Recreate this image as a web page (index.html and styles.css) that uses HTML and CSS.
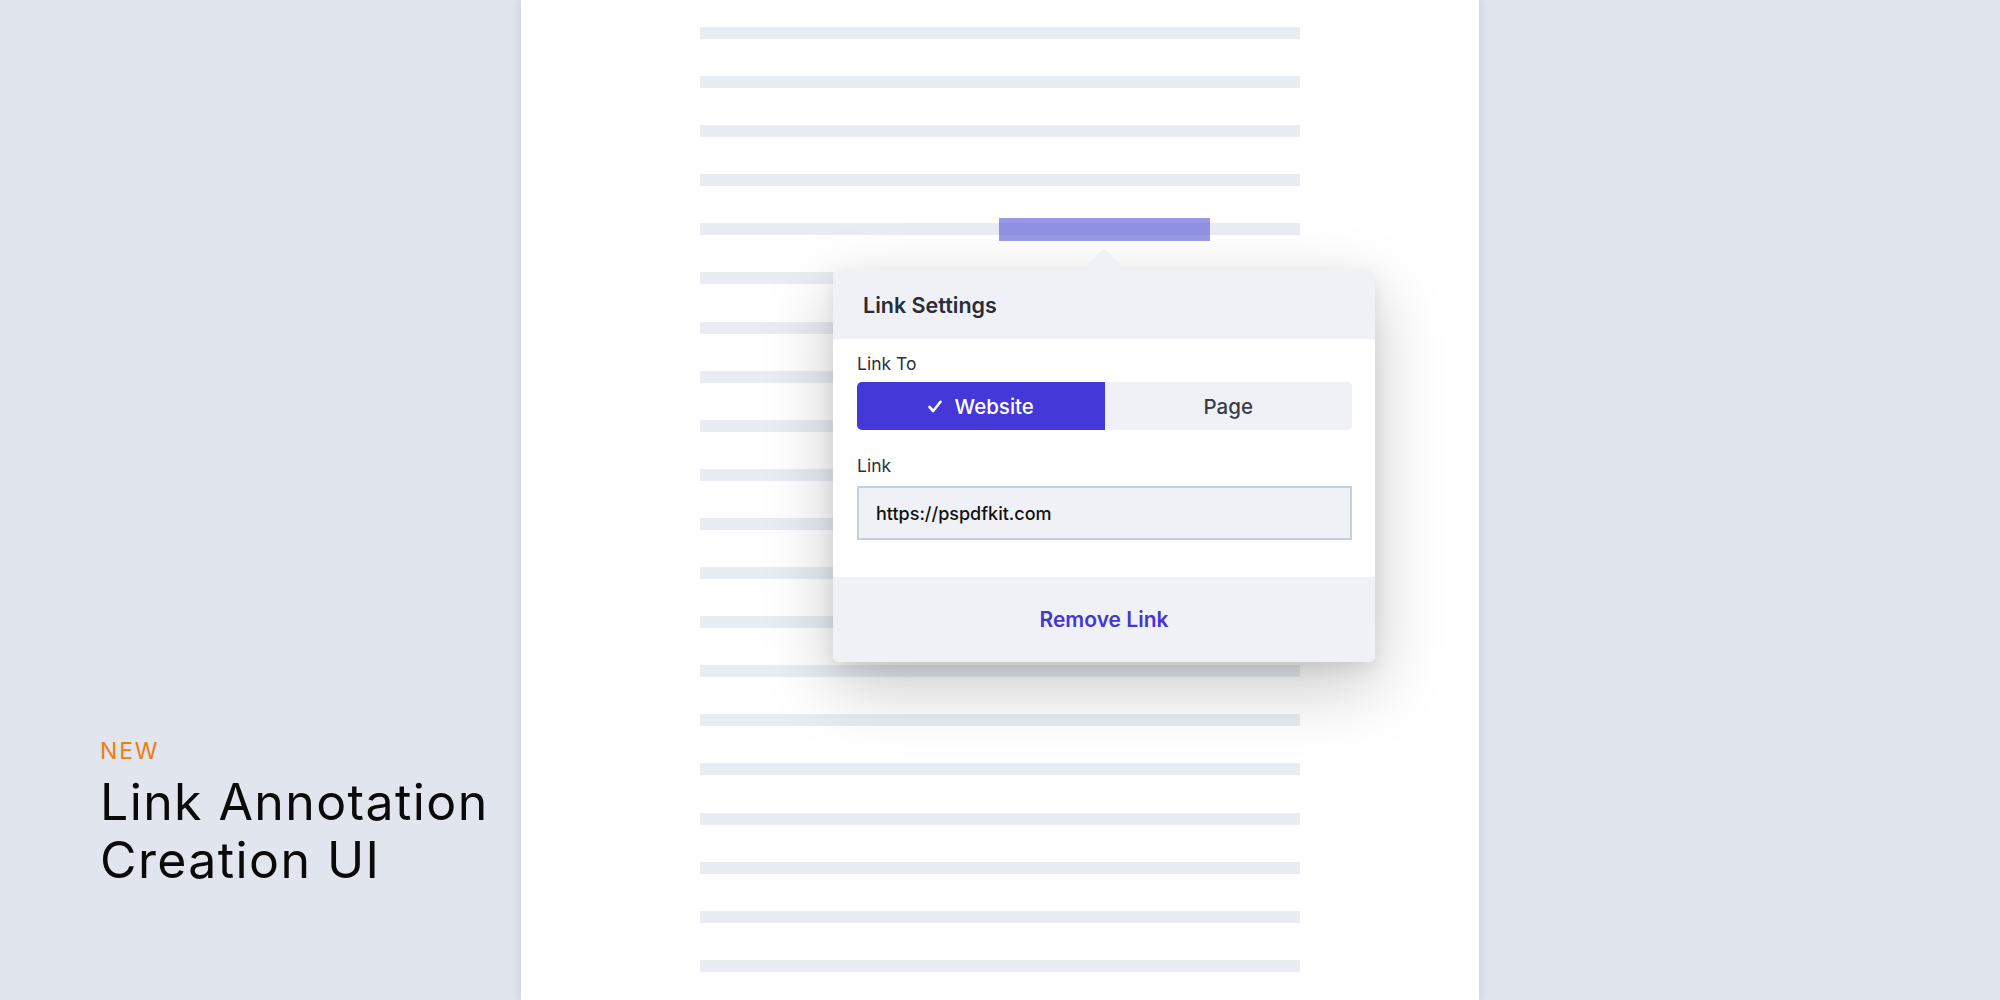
FILE: index.html
```html
<!DOCTYPE html>
<html lang="en">
<head>
<meta charset="utf-8">
<title>Link Annotation Creation UI</title>
<link rel="stylesheet" href="styles.css">
</head>
<body>
<div class="stage">
  <aside class="caption">
    <div class="eyebrow">NEW</div>
    <h1 class="headline">Link Annotation<br>Creation UI</h1>
  </aside>
  <main class="sheet">
    <div class="lines">
      <div class="line"></div>
      <div class="line"></div>
      <div class="line"></div>
      <div class="line"></div>
      <div class="line line-marked"><span class="mark"></span></div>
      <div class="line"></div>
      <div class="line"></div>
      <div class="line"></div>
      <div class="line"></div>
      <div class="line"></div>
      <div class="line"></div>
      <div class="line"></div>
      <div class="line"></div>
      <div class="line"></div>
      <div class="line"></div>
      <div class="line"></div>
      <div class="line"></div>
      <div class="line"></div>
      <div class="line"></div>
      <div class="line"></div>
    </div>
    <section class="popover">
      <span class="popover-arrow"></span>
      <header class="popover-head">Link Settings</header>
      <div class="popover-body">
        <div class="field-label">Link To</div>
        <div class="segmented">
          <button class="seg seg-active">
            <svg class="check" viewBox="0 0 14 13" width="14" height="13"><path d="M1.5 7 L5.2 11 L12.5 1.8" fill="none" stroke="#fff" stroke-width="2.6" stroke-linecap="round" stroke-linejoin="round"/></svg>
            Website
          </button>
          <button class="seg">Page</button>
        </div>
        <div class="field-label field-label-second">Link</div>
        <div class="input">https://pspdfkit.com</div>
      </div>
      <footer class="popover-foot">
        <span class="remove">Remove Link</span>
      </footer>
    </section>
  </main>
  <div class="spacer"></div>
</div>
</body>
</html>
```

FILE: styles.css
```css
* { box-sizing: border-box; }
html, body {
  margin: 0;
  padding: 0;
  height: 100%;
}
body {
  background: #e1e5ed;
  font-family: Inter, "Noto Sans", sans-serif;
  overflow: hidden;
}
.stage {
  display: grid;
  grid-template-columns: 521px 958px 1fr;
  height: 1000px;
}
.caption {
  align-self: end;
  padding: 0 0 111px 100px;
  position: relative;
  z-index: 2;
}
.eyebrow {
  color: #f07d0c;
  font-size: 23px;
  letter-spacing: 1.8px;
  line-height: 26px;
  font-weight: 400;
  margin-bottom: 9px;
}
.headline {
  margin: 0;
  font-size: 50px;
  font-weight: 400;
  line-height: 58px;
  letter-spacing: 1.4px;
  color: #0a0a0a;
  white-space: nowrap;
}
.sheet {
  position: relative;
  background: #ffffff;
  box-shadow: 0 0 10px rgba(40, 50, 80, 0.14);
  height: 1000px;
}
.lines {
  height: 972px;
  padding: 27px 0 0 179px;
  display: flex;
  flex-direction: column;
  justify-content: space-between;
}
.line {
  width: 600px;
  height: 12px;
  background: #e9ecf3;
}
.line-marked { position: relative; }
.mark {
  position: absolute;
  left: 299px;
  top: -5px;
  width: 211px;
  height: 23px;
  background: rgba(80, 80, 215, 0.58);
}
.popover {
  position: absolute;
  left: 312px;
  top: 270px;
  width: 542px;
  border-radius: 6px;
  background: #ffffff;
  box-shadow: 0 24px 70px rgba(0, 0, 0, 0.22), 0 6px 18px rgba(0, 0, 0, 0.08);
}
.popover-arrow {
  position: absolute;
  left: 257px;
  top: -16px;
  width: 28px;
  height: 28px;
  background: #f0f1f6;
  border-radius: 4px;
  transform: rotate(45deg);
}
.popover-head {
  position: relative;
  height: 69px;
  background: #f0f1f6;
  border-radius: 6px 6px 0 0;
  padding: 0 30px;
  display: flex;
  align-items: center;
  font-size: 21.5px;
  font-weight: 600;
  color: #2a2c37;
}
.popover-body {
  padding: 14px 23px 37px 24px;
}
.field-label {
  font-size: 17.5px;
  color: #2f313c;
  line-height: 22px;
  margin-bottom: 7px;
}
.field-label-second {
  margin-top: 25px;
  margin-bottom: 9px;
}
.segmented {
  display: flex;
  height: 48px;
  border-radius: 5px;
  overflow: hidden;
  background: #f0f1f6;
}
.seg {
  flex: 1;
  border: 0;
  margin: 0;
  padding: 0;
  background: #f0f1f6;
  font-family: inherit;
  font-size: 20.5px;
  font-weight: 500;
  color: #3a3c48;
  display: flex;
  align-items: center;
  justify-content: center;
  gap: 13px;
}
.seg-active {
  background: #4438d9;
  color: #ffffff;
}
.check { display: block; }
.input {
  height: 54px;
  border: 2px solid #c7cfdd;
  background: #f0f1f6;
  display: flex;
  align-items: center;
  padding-left: 17px;
  font-size: 18px;
  font-weight: 500;
  color: #111111;
}
.popover-foot {
  height: 85px;
  background: #f0f1f6;
  border-radius: 0 0 6px 6px;
  display: flex;
  align-items: center;
  justify-content: center;
}
.remove {
  color: #4436d6;
  font-size: 21px;
  font-weight: 600;
}
```
